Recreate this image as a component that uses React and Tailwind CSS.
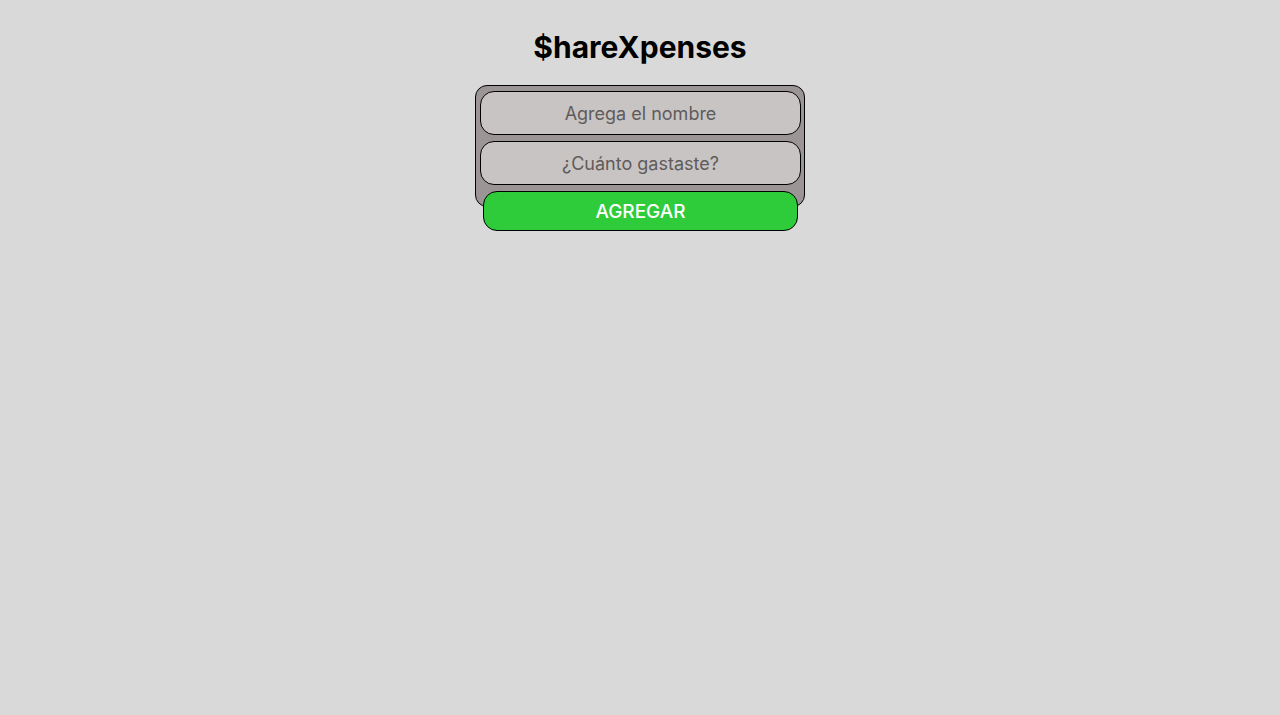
export default function App() {
  return (
    <div
      className="min-h-[715px] bg-[#d9d9d9] flex flex-col items-center"
      style={{ fontFamily: 'Inter, "Noto Sans", sans-serif' }}
    >
      <h1 className="mt-[28px] text-[30px] leading-[38px] font-bold text-black">
        $hareXpenses
      </h1>
      {/* Form card */}
      <form
        className="mt-[19px] w-[330px] h-[122px] bg-[#9b9595] border border-black rounded-[12px] pl-[4px] pr-[3px] pt-[5px] flex flex-col gap-[6px]"
        onSubmit={(e) => e.preventDefault()}
      >
        <input
          type="text"
          placeholder="Agrega el nombre"
          className="h-[44px] w-full shrink-0 bg-[#c8c4c3] border border-black rounded-[14px] text-center text-[18px] text-[#333] placeholder:text-[#5f5b5b] outline-none"
        />
        <input
          type="text"
          placeholder="¿Cuánto gastaste?"
          className="h-[44px] w-full shrink-0 bg-[#c8c4c3] border border-black rounded-[14px] text-center text-[18px] text-[#333] placeholder:text-[#5f5b5b] outline-none"
        />
        <button
          type="submit"
          className="h-[40px] shrink-0 mx-[3px] pt-[2px] bg-[#2ecc3a] border border-black rounded-[14px] text-white text-[19px] font-medium"
        >
          AGREGAR
        </button>
      </form>
    </div>
  );
}
